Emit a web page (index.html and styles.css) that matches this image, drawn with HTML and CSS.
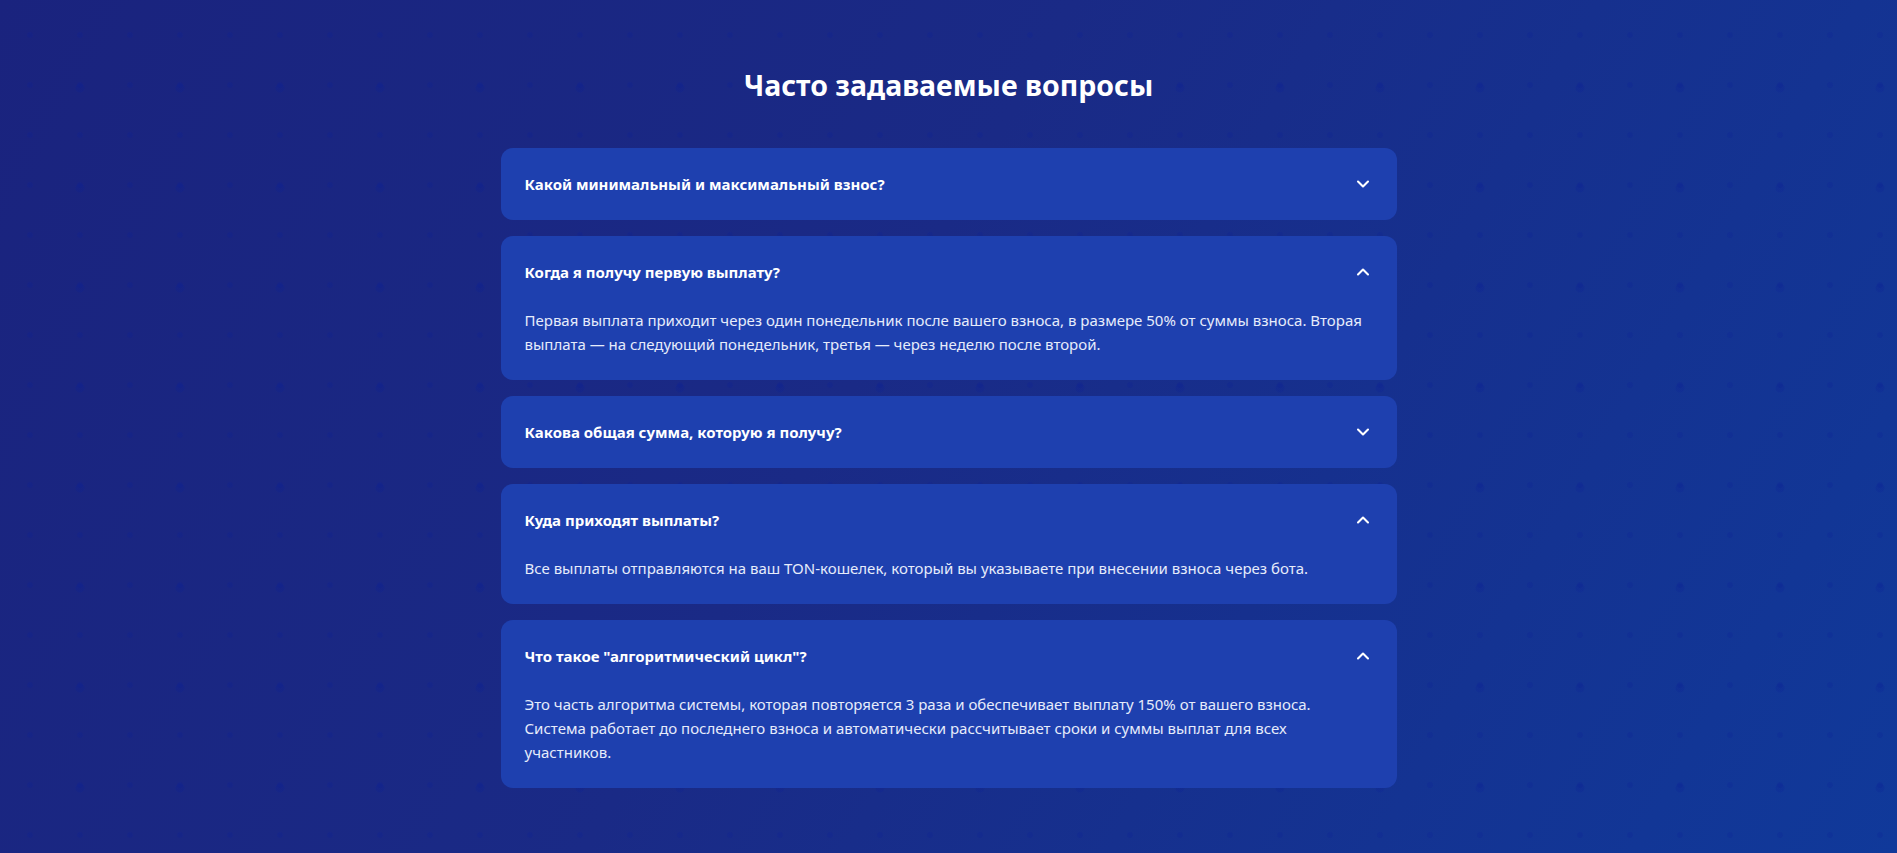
FILE: index.html
```html
<!DOCTYPE html>
<html lang="ru">
<head>
<meta charset="utf-8">
<title>FAQ</title>
<link rel="stylesheet" href="styles.css">
</head>
<body>
<section class="faq">
  <div class="container">
    <h2 class="title">Часто задаваемые вопросы</h2>
    <div class="list">
      <div class="item">
        <div class="q"><span>Какой минимальный и максимальный взнос?</span>
          <svg class="chev" viewBox="0 0 24 24"><path d="M6 9l6 6 6-6"/></svg></div>
      </div>
      <div class="item open">
        <div class="q"><span>Когда я получу первую выплату?</span>
          <svg class="chev" viewBox="0 0 24 24"><path d="M18 15l-6-6-6 6"/></svg></div>
        <div class="a">Первая выплата приходит через один понедельник после вашего взноса, в размере 50% от суммы взноса. Вторая выплата — на следующий понедельник, третья — через неделю после второй.</div>
      </div>
      <div class="item">
        <div class="q"><span>Какова общая сумма, которую я получу?</span>
          <svg class="chev" viewBox="0 0 24 24"><path d="M6 9l6 6 6-6"/></svg></div>
      </div>
      <div class="item open">
        <div class="q"><span>Куда приходят выплаты?</span>
          <svg class="chev" viewBox="0 0 24 24"><path d="M18 15l-6-6-6 6"/></svg></div>
        <div class="a">Все выплаты отправляются на ваш TON-кошелек, который вы указываете при внесении взноса через бота.</div>
      </div>
      <div class="item open">
        <div class="q"><span>Что такое "алгоритмический цикл"?</span>
          <svg class="chev" viewBox="0 0 24 24"><path d="M18 15l-6-6-6 6"/></svg></div>
        <div class="a">Это часть алгоритма системы, которая повторяется 3 раза и обеспечивает выплату 150% от вашего взноса. Система работает до последнего взноса и автоматически рассчитывает сроки и суммы выплат для всех участников.</div>
      </div>
    </div>
  </div>
</section>
</body>
</html>
```
FILE: styles.css
```css
* { box-sizing: border-box; }
html, body { margin: 0; padding: 0; }
body {
  font-family: "Segoe UI", "Noto Sans", "Open Sans", sans-serif;
  color: #fff;
  min-height: 853px;
  background-color: #172a8c;
  background-image:
    radial-gradient(circle, rgba(10, 30, 150, 0.22) 2.5px, transparent 3.5px),
    radial-gradient(circle, rgba(10, 30, 150, 0.22) 4px, transparent 5px),
    linear-gradient(120deg, #1a237e 0%, #1a2a86 45%, #10399a 100%);
  background-size: 50px 50px, 100px 100px, 100% 100%;
  background-position: 5px 10px, 30px 38px, 0 0;
}
.faq { padding: 67px 16px 64px; }
.container { max-width: 896px; margin: 0 auto; }
.title {
  margin: 0 0 45px;
  text-align: center;
  font-size: 28.5px;
  line-height: 36px;
  font-weight: 700;
}
.list { display: flex; flex-direction: column; gap: 16px; }
.item {
  background: #1e40af;
  border-radius: 12px;
}
.q {
  display: flex;
  align-items: center;
  justify-content: space-between;
  padding: 24px;
  font-size: 15px;
  font-weight: 700;
  line-height: 24px;
}
.chev {
  width: 20px; height: 20px;
  fill: none; stroke: #fff; stroke-width: 2.5;
  stroke-linecap: round; stroke-linejoin: round;
}
.a {
  padding: 0 24px 24px;
  font-size: 15px;
  line-height: 24px;
  color: #e6ecfb;
}
```
